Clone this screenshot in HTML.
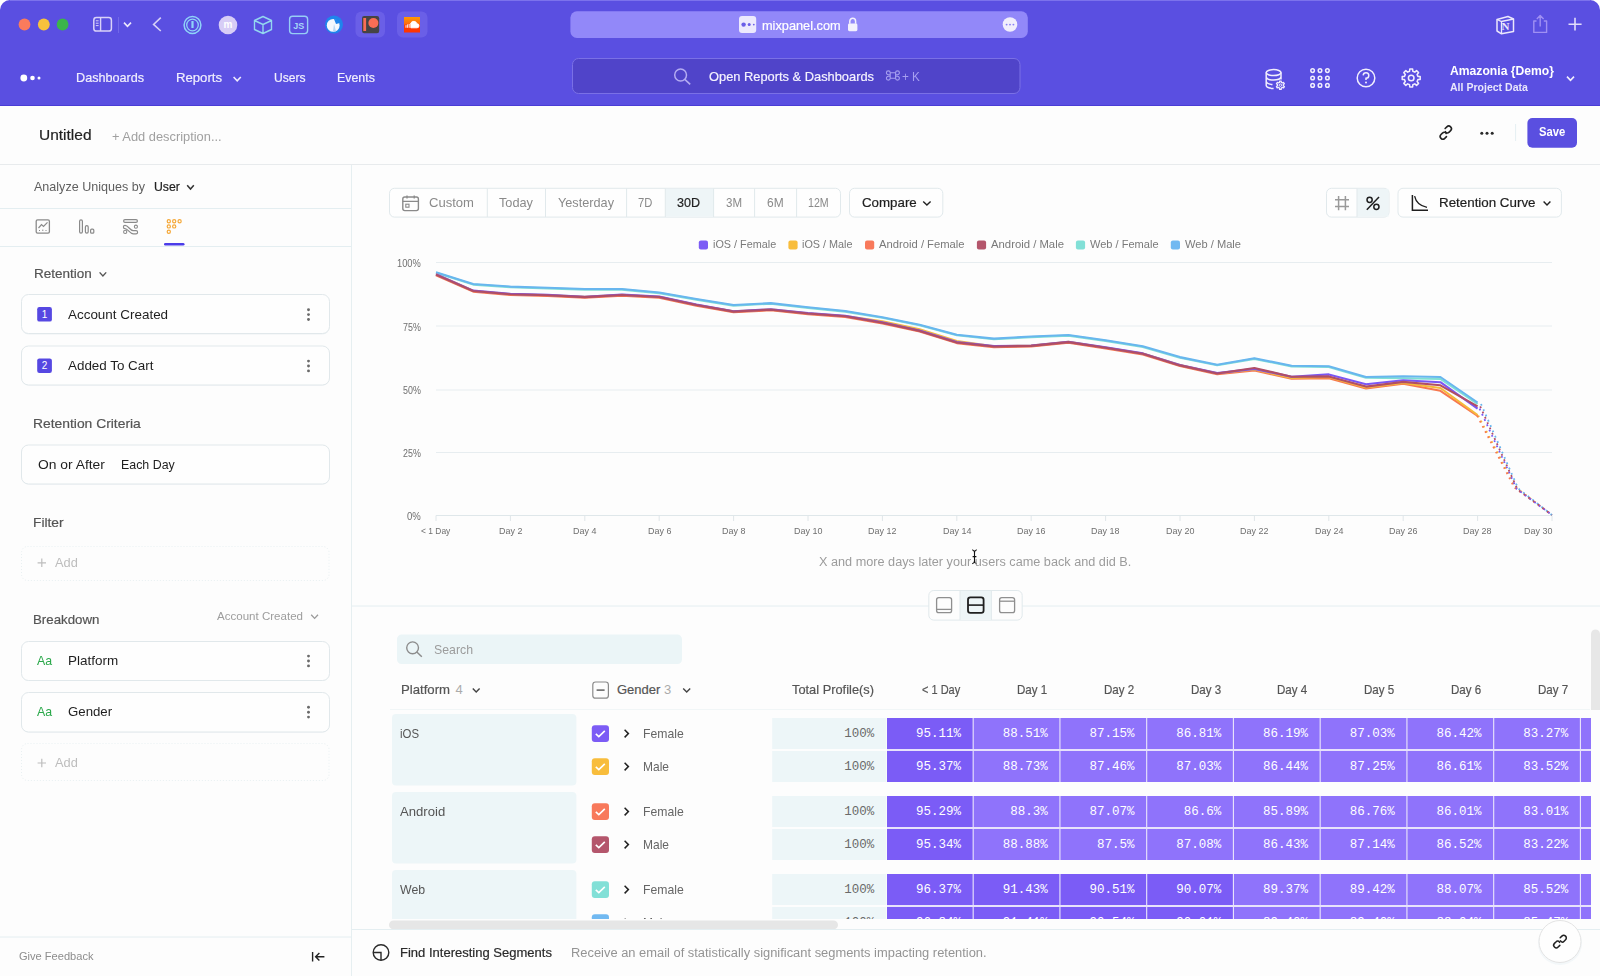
<!DOCTYPE html>
<html><head><meta charset="utf-8"><title>Mixpanel</title>
<style>
html,body{margin:0;padding:0;width:1600px;height:976px;overflow:hidden;background:#ffffff;}
body{position:relative;font-family:"Liberation Sans",sans-serif;}
.t{position:absolute;white-space:nowrap;}
.b{position:absolute;display:block;}
</style></head><body>
<div class="b" style="left:0px;top:0px;width:1600px;height:106px;background:#5a4fe1;border-radius:10px 10px 0 0;"></div>
<div class="b" style="left:10px;top:0px;width:1580px;height:1px;background:#7c72ec;"></div>
<div class="b" style="left:0px;top:105px;width:1600px;height:1px;background:#4a3dd6;"></div>
<svg class="b" style="left:0px;top:0px;" width="1600" height="106" viewBox="0 0 1600 106"><circle cx="24.5" cy="24.5" r="5.9" fill="#fa7b5c"/><circle cx="43.8" cy="24.5" r="5.9" fill="#f8c23c"/><circle cx="62.6" cy="24.5" r="5.9" fill="#3bb54a"/><rect x="93.8" y="17.6" width="17.6" height="13.4" rx="2.6" fill="none" stroke="#d9d2f8" stroke-width="1.5"/><line x1="100.6" y1="17.6" x2="100.6" y2="31" stroke="#d9d2f8" stroke-width="1.4"/><line x1="95.8" y1="20.8" x2="98.6" y2="20.8" stroke="#d9d2f8" stroke-width="1"/><line x1="95.8" y1="23.2" x2="98.6" y2="23.2" stroke="#d9d2f8" stroke-width="1"/><line x1="95.8" y1="25.6" x2="98.6" y2="25.6" stroke="#d9d2f8" stroke-width="1"/><line x1="118.5" y1="17" x2="118.5" y2="33" stroke="#7268e8" stroke-width="1"/><polyline points="124,22.6 127.5,26.4 131,22.6" fill="none" stroke="#ebe7fc" stroke-width="1.6"/><polyline points="160.8,17.6 153.6,24.4 160.8,31" fill="none" stroke="#d6cff6" stroke-width="1.6"/><circle cx="192.5" cy="25" r="8.4" fill="none" stroke="#8fd3f8" stroke-width="1.5"/><circle cx="192.5" cy="25" r="5.8" fill="none" stroke="#8fd3f8" stroke-width="1.3"/><rect x="191.4" y="21" width="2.2" height="7" fill="#8fd3f8"/><circle cx="228" cy="25" r="9.3" fill="#d7cdf6"/><path d="M263 16.5 L271.5 20.5 L271.5 29.5 L263 33.5 L254.5 29.5 L254.5 20.5 Z M254.5 20.5 L263 24.5 L271.5 20.5 M263 24.5 L263 33.5" fill="none" stroke="#93d6ef" stroke-width="1.4" stroke-linejoin="round"/><rect x="289.6" y="16.2" width="18" height="17.4" rx="3" fill="none" stroke="#96cdf5" stroke-width="1.4"/><circle cx="334" cy="24.6" r="9" fill="#1f84ec"/><circle cx="333.2" cy="25.4" r="6.4" fill="#f4f8fe"/><path d="M334 19 Q339 19 340 23 L336 24 Q335 21.5 334 19Z" fill="#1f84ec"/><path d="M333 31 L334 24 L336 31Z" fill="#b9d7f4"/><rect x="355.5" y="11.5" width="29.5" height="26" rx="6" fill="#6a5fe7"/><rect x="362" y="16" width="17.2" height="17.2" rx="2.2" fill="#454444"/><rect x="363.3" y="18" width="2.8" height="13" fill="#f96d55"/><circle cx="373.4" cy="23" r="5" fill="#f96d55"/><rect x="397" y="11.5" width="30.5" height="26" rx="6" fill="#6a5fe7"/><defs><linearGradient id="sc" x1="0" y1="0" x2="0" y2="1"><stop offset="0" stop-color="#ff9a00"/><stop offset="0.45" stop-color="#ff6a10"/><stop offset="0.55" stop-color="#ff3d00"/><stop offset="1" stop-color="#ff3300"/></linearGradient></defs><rect x="404" y="17" width="16" height="15.5" fill="url(#sc)"/><path d="M406 27.8 V25.2 M407.6 27.8 V24.4 M409.2 27.8 V24 M410.8 27.8 H417 A2 2 0 0 0 417 23.8 A3.4 3.4 0 0 0 410.8 23 Z" fill="#fff" stroke="#fff" stroke-width="0.9"/><rect x="570.4" y="11.3" width="457.4" height="26.6" rx="6.5" fill="#9288f9"/><rect x="739" y="16" width="17.2" height="17" rx="3" fill="#ece9fd"/><circle cx="743.6" cy="24.6" r="2.2" fill="#6a5ee8"/><circle cx="749.2" cy="24.6" r="1.5" fill="#6a5ee8"/><circle cx="753.8" cy="24.6" r="0.9" fill="#6a5ee8"/><rect x="848" y="23.6" width="9.4" height="7.6" rx="1.4" fill="#f3f1fd"/><path d="M849.8 23.8 V21.2 A2.9 2.9 0 0 1 855.6 21.2 V23.8" fill="none" stroke="#f3f1fd" stroke-width="1.5"/><circle cx="1010" cy="24.5" r="7.3" fill="#f1effc"/><circle cx="1006.6" cy="24.6" r="0.95" fill="#8a80f5"/><circle cx="1010" cy="24.6" r="0.95" fill="#8a80f5"/><circle cx="1013.4" cy="24.6" r="0.95" fill="#8a80f5"/><path d="M1497 19.5 L1508 16.5 L1513.5 19 L1513.5 31.5 L1501.5 33.8 L1497 31 Z" fill="none" stroke="#ebe7fc" stroke-width="1.5" stroke-linejoin="round"/><path d="M1497 19.5 L1501.5 21.5 L1513.5 19 M1501.5 21.5 V33.8" fill="none" stroke="#ebe7fc" stroke-width="1.3"/><path d="M1536.5 21 H1533.8 V32.4 H1546.6 V21 H1543.8 M1540.2 26.5 V15.6 M1536.8 19 L1540.2 15.6 L1543.6 19" fill="none" stroke="#9f90f3" stroke-width="1.4" stroke-linejoin="round"/><path d="M1568.5 24.2 H1581.6 M1575 17.8 V30.6" stroke="#e2ddfb" stroke-width="1.6"/><circle cx="23.8" cy="78" r="3.4" fill="#fff"/><circle cx="32.5" cy="78" r="2.3" fill="#fff"/><circle cx="39" cy="78" r="1.5" fill="#fff"/><polyline points="233.6,77 237.2,80.8 240.8,77" fill="none" stroke="#eeebfd" stroke-width="1.6"/><rect x="572.5" y="58.5" width="447.5" height="35" rx="6" fill="#5044c9" stroke="#7a70e6" stroke-width="1"/><circle cx="680.6" cy="75" r="5.9" fill="none" stroke="#b4acf2" stroke-width="1.5"/><line x1="684.8" y1="79.3" x2="690.2" y2="84.4" stroke="#b4acf2" stroke-width="1.6"/><path d="M890.2 72.8 H895.6 V78.2 H890.2 Z M890.2 72.8 A1.9 1.9 0 1 0 888.3 74.7 H890.2 Z M895.6 72.8 A1.9 1.9 0 1 1 897.5 74.7 H895.6 Z M890.2 78.2 A1.9 1.9 0 1 1 888.3 76.3 H890.2 Z M895.6 78.2 A1.9 1.9 0 1 0 897.5 76.3 H895.6 Z" fill="none" stroke="#a69ff0" stroke-width="1.1"/><ellipse cx="1273.6" cy="72.6" rx="7.4" ry="3" fill="none" stroke="#f1eefd" stroke-width="1.5"/><path d="M1266.2 72.6 V85.4 Q1266.6 88.4 1273.6 88.4 M1266.2 77 Q1267 80 1273.6 80 Q1280.2 80 1281 77 M1266.2 81.4 Q1267 84.3 1272.5 84.4 M1281 72.6 V79.5" fill="none" stroke="#f1eefd" stroke-width="1.5"/><polygon points="1279.47,82.35 1279.61,81.07 1281.19,81.07 1281.33,82.35 1282.41,82.97 1283.58,82.46 1284.37,83.82 1283.33,84.58 1283.33,85.82 1284.37,86.58 1283.58,87.94 1282.41,87.43 1281.33,88.05 1281.19,89.33 1279.61,89.33 1279.47,88.05 1278.39,87.43 1277.22,87.94 1276.43,86.58 1277.47,85.82 1277.47,84.58 1276.43,83.82 1277.22,82.46 1278.39,82.97" fill="#5a4fe1" stroke="#f1eefd" stroke-width="1.3" stroke-linejoin="round"/><circle cx="1280.4" cy="85.2" r="1.2" fill="none" stroke="#f1eefd" stroke-width="1"/><circle cx="1312.6" cy="70.6" r="1.8" fill="none" stroke="#f1eefd" stroke-width="1.5"/><circle cx="1320" cy="70.6" r="1.8" fill="none" stroke="#f1eefd" stroke-width="1.5"/><circle cx="1327.4" cy="70.6" r="1.8" fill="none" stroke="#f1eefd" stroke-width="1.5"/><circle cx="1312.6" cy="78" r="1.8" fill="none" stroke="#f1eefd" stroke-width="1.5"/><circle cx="1320" cy="78" r="1.8" fill="none" stroke="#f1eefd" stroke-width="1.5"/><circle cx="1327.4" cy="78" r="1.8" fill="none" stroke="#f1eefd" stroke-width="1.5"/><circle cx="1312.6" cy="85.4" r="1.8" fill="none" stroke="#f1eefd" stroke-width="1.5"/><circle cx="1320" cy="85.4" r="1.8" fill="none" stroke="#f1eefd" stroke-width="1.5"/><circle cx="1327.4" cy="85.4" r="1.8" fill="none" stroke="#f1eefd" stroke-width="1.5"/><circle cx="1366" cy="78" r="8.8" fill="none" stroke="#f1eefd" stroke-width="1.5"/><path d="M1363.2 75.4 A2.8 2.8 0 1 1 1366 78.3 V80" fill="none" stroke="#f1eefd" stroke-width="1.5"/><circle cx="1366" cy="82.6" r="1" fill="#f1eefd"/><polygon points="1409.59,71.29 1409.78,69.01 1412.62,69.01 1412.81,71.29 1414.81,72.12 1416.55,70.64 1418.56,72.65 1417.08,74.39 1417.91,76.39 1420.19,76.58 1420.19,79.42 1417.91,79.61 1417.08,81.61 1418.56,83.35 1416.55,85.36 1414.81,83.88 1412.81,84.71 1412.62,86.99 1409.78,86.99 1409.59,84.71 1407.59,83.88 1405.85,85.36 1403.84,83.35 1405.32,81.61 1404.49,79.61 1402.21,79.42 1402.21,76.58 1404.49,76.39 1405.32,74.39 1403.84,72.65 1405.85,70.64 1407.59,72.12" fill="none" stroke="#f1eefd" stroke-width="1.5" stroke-linejoin="round"/><circle cx="1411.2" cy="78" r="2.8" fill="none" stroke="#f1eefd" stroke-width="1.5"/><polyline points="1567,76.6 1570.5,80.4 1574,76.6" fill="none" stroke="#f1eefd" stroke-width="1.6"/></svg>
<div class="t" style="left:762.40px;top:19.00px;font-size:13px;line-height:13px;color:#ffffff;transform:scaleX(0.9800);transform-origin:0 0;-webkit-text-stroke:0.2px currentColor;">mixpanel.com</div>
<div class="t" style="left:223.55px;top:20.14px;font-size:10px;line-height:10px;color:#ffffff;font-weight:bold;">m</div>
<div class="t" style="left:293.20px;top:21.59px;font-size:9px;line-height:9px;color:#a6d6f8;font-weight:bold;">JS</div>
<div class="t" style="left:1501.60px;top:20.89px;font-size:11px;line-height:11px;color:#ebe7fc;font-weight:bold;font-family:'Liberation Serif',serif;">N</div>
<div class="t" style="left:76.40px;top:71.38px;font-size:13.5px;line-height:13.5px;color:#f1effd;transform:scaleX(0.9368);transform-origin:0 0;-webkit-text-stroke:0.2px currentColor;">Dashboards</div>
<div class="t" style="left:175.70px;top:71.38px;font-size:13.5px;line-height:13.5px;color:#f1effd;transform:scaleX(0.9735);transform-origin:0 0;-webkit-text-stroke:0.2px currentColor;">Reports</div>
<div class="t" style="left:274.00px;top:71.38px;font-size:13.5px;line-height:13.5px;color:#f1effd;transform:scaleX(0.8965);transform-origin:0 0;-webkit-text-stroke:0.2px currentColor;">Users</div>
<div class="t" style="left:336.60px;top:71.38px;font-size:13.5px;line-height:13.5px;color:#f1effd;transform:scaleX(0.9164);transform-origin:0 0;-webkit-text-stroke:0.2px currentColor;">Events</div>
<div class="t" style="left:708.50px;top:69.58px;font-size:13.5px;line-height:13.5px;color:#f4f2fe;transform:scaleX(0.9518);transform-origin:0 0;-webkit-text-stroke:0.2px currentColor;">Open Reports &amp; Dashboards</div>
<div class="t" style="left:902.00px;top:69.58px;font-size:13.5px;line-height:13.5px;color:#a69ff0;transform:scaleX(0.8668);transform-origin:0 0;">+ K</div>
<div class="t" style="left:1450.00px;top:64.00px;font-size:13px;line-height:13px;color:#ffffff;font-weight:bold;transform:scaleX(0.9348);transform-origin:0 0;">Amazonia {Demo}</div>
<div class="t" style="left:1450.00px;top:81.69px;font-size:11px;line-height:11px;color:#e9e6fc;font-weight:bold;transform:scaleX(0.9582);transform-origin:0 0;">All Project Data</div>
<div class="b" style="left:0px;top:106px;width:1600px;height:58px;background:#fdfdfd;"></div>
<div class="b" style="left:0px;top:164px;width:1600px;height:1px;background:#e8ebed;"></div>
<div class="t" style="left:38.50px;top:127.31px;font-size:15px;line-height:15px;color:#1f1f1f;transform:scaleX(1.0324);transform-origin:0 0;-webkit-text-stroke:0.2px currentColor;">Untitled</div>
<div class="t" style="left:111.90px;top:130.62px;font-size:12.5px;line-height:12.5px;color:#a0a0a0;transform:scaleX(1.0277);transform-origin:0 0;">+ Add description...</div>
<svg class="b" style="left:1400px;top:106px;" width="200" height="58" viewBox="1400 106 200 58"><g transform="translate(1445.8 132.6) scale(0.86) translate(-1446 -132.3)"><path d="M1445.2 127.6 L1447.2 125.6 A2.4 2.4 0 0 1 1451.6 130 L1449.6 132 A2.4 2.4 0 0 1 1445.6 131.2 M1446.8 137 L1444.8 139 A2.4 2.4 0 0 1 1440.4 134.6 L1442.4 132.6 A2.4 2.4 0 0 1 1446.4 133.4" fill="none" stroke="#222" stroke-width="1.8" stroke-linecap="round"/></g><circle cx="1481.8" cy="133.2" r="1.5" fill="#2a2a2a"/><circle cx="1487" cy="133.2" r="1.5" fill="#2a2a2a"/><circle cx="1492.2" cy="133.2" r="1.5" fill="#2a2a2a"/><line x1="1515.6" y1="124" x2="1515.6" y2="141" stroke="#e5eff2" stroke-width="1"/><rect x="1527.4" y="118" width="49.6" height="29.7" rx="5" fill="#5a4fe0"/></svg>
<div class="t" style="left:1538.70px;top:126.14px;font-size:12.6px;line-height:12.6px;color:#ffffff;font-weight:bold;transform:scaleX(0.8930);transform-origin:0 0;">Save</div>
<div class="b" style="left:0px;top:165px;width:351px;height:811px;background:#fdfdfd;"></div>
<div class="b" style="left:351px;top:165px;width:1px;height:811px;background:#e6eff1;"></div>
<div class="t" style="left:34.00px;top:179.50px;font-size:13px;line-height:13px;color:#5f5f5f;transform:scaleX(0.9652);transform-origin:0 0;">Analyze Uniques by</div>
<div class="t" style="left:153.60px;top:179.50px;font-size:13px;line-height:13px;color:#222;transform:scaleX(0.9435);transform-origin:0 0;-webkit-text-stroke:0.2px currentColor;">User</div>
<svg class="b" style="left:0px;top:165px;" width="351" height="811" viewBox="0 165 351 811"><polyline points="187.2,185.2 190.5,189 193.8,185.2" fill="none" stroke="#333" stroke-width="1.5"/><line x1="0" y1="208.5" x2="351" y2="208.5" stroke="#e4eef1" stroke-width="1"/><line x1="0" y1="246.5" x2="351" y2="246.5" stroke="#e4eef1" stroke-width="1"/><rect x="36.2" y="219.8" width="13.2" height="13.4" rx="1.4" fill="none" stroke="#8a8a8a" stroke-width="1.3"/><polyline points="38.5,228 41.5,224.6 43.5,226.4 47.5,222.4" fill="none" stroke="#8a8a8a" stroke-width="1.2"/><path d="M39.5 231 v-1 M42.8 231 v-1.4 M46 231 v-1" stroke="#8a8a8a" stroke-width="1"/><rect x="79.6" y="219.8" width="2.8" height="13.4" rx="1.4" fill="none" stroke="#8a8a8a" stroke-width="1.2"/><rect x="85.4" y="225.6" width="2.8" height="7.6" rx="1.4" fill="none" stroke="#8a8a8a" stroke-width="1.2"/><rect x="90.6" y="229.2" width="3.2" height="4" rx="1" fill="none" stroke="#8a8a8a" stroke-width="1.2"/><rect x="123.6" y="219.6" width="13.8" height="2.8" rx="1.4" fill="none" stroke="#8a8a8a" stroke-width="1.2"/><path d="M125 225.4 C128.4 225.4 129.8 230.6 133.2 230.6 H136 A1.6 1.6 0 0 1 136 233.8 H133.2 C129.4 233.8 128 228.6 125 228.6 A1.6 1.6 0 0 1 125 225.4 Z" fill="none" stroke="#8a8a8a" stroke-width="1.15"/><circle cx="135.9" cy="226.7" r="1.55" fill="none" stroke="#8a8a8a" stroke-width="1.1"/><circle cx="125.2" cy="231.9" r="1.6" fill="none" stroke="#8a8a8a" stroke-width="1.1"/><circle cx="168.8" cy="221.2" r="1.6" fill="none" stroke="#f5a93a" stroke-width="1.2"/><circle cx="174.2" cy="221.2" r="1.6" fill="none" stroke="#f5a93a" stroke-width="1.2"/><circle cx="179.6" cy="221.2" r="1.6" fill="none" stroke="#f5a93a" stroke-width="1.2"/><circle cx="168.8" cy="226.4" r="1.6" fill="none" stroke="#f5a93a" stroke-width="1.2"/><circle cx="174.2" cy="226.4" r="1.6" fill="none" stroke="#f5a93a" stroke-width="1.2"/><circle cx="168.8" cy="231.8" r="1.6" fill="none" stroke="#f5a93a" stroke-width="1.2"/><rect x="164" y="243" width="20.5" height="2.6" rx="1.3" fill="#4b3ce9"/><polyline points="99.6,272.4 102.9,276 106.2,272.4" fill="none" stroke="#555" stroke-width="1.4"/><rect x="21.5" y="295.5" width="308" height="39" rx="7" fill="#eef2f4"/><rect x="21.5" y="294.5" width="308" height="39" rx="7" fill="#fefefe" stroke="#e1e8eb" stroke-width="1"/><circle cx="308.5" cy="309.70000000000005" r="1.45" fill="#6a6a6a"/><circle cx="308.5" cy="314.6" r="1.45" fill="#6a6a6a"/><circle cx="308.5" cy="319.5" r="1.45" fill="#6a6a6a"/><rect x="21.5" y="346.5" width="308" height="39" rx="7" fill="#eef2f4"/><rect x="21.5" y="346.0" width="308" height="39.0" rx="7" fill="#fefefe" stroke="#e1e8eb" stroke-width="1"/><circle cx="308.5" cy="361.1" r="1.45" fill="#6a6a6a"/><circle cx="308.5" cy="366" r="1.45" fill="#6a6a6a"/><circle cx="308.5" cy="370.9" r="1.45" fill="#6a6a6a"/><rect x="37.2" y="307" width="14.7" height="14.6" rx="2.2" fill="#5648e2"/><rect x="37.2" y="358.4" width="14.7" height="14.6" rx="2.2" fill="#5648e2"/><rect x="21.5" y="445.5" width="308" height="39" rx="7" fill="#eef2f4"/><rect x="21.5" y="445.0" width="308" height="39.0" rx="7" fill="#fefefe" stroke="#e1e8eb" stroke-width="1"/><rect x="21.5" y="546.5" width="307.5" height="34" rx="6" fill="none" stroke="#e8f0f2" stroke-width="1" stroke-dasharray="1 2"/><path d="M37.6 562.8 H46 M41.8 558.6 V567" stroke="#bdbdbd" stroke-width="1.2"/><polyline points="311.2,614.8 314.6,618.4 318,614.8" fill="none" stroke="#9a9a9a" stroke-width="1.3"/><rect x="21.5" y="642" width="308" height="39" rx="7" fill="#eef2f4"/><rect x="21.5" y="641.5" width="308" height="39" rx="7" fill="#fefefe" stroke="#e1e8eb" stroke-width="1"/><circle cx="308.5" cy="656.1" r="1.45" fill="#6a6a6a"/><circle cx="308.5" cy="661" r="1.45" fill="#6a6a6a"/><circle cx="308.5" cy="665.9" r="1.45" fill="#6a6a6a"/><rect x="21.5" y="693" width="308" height="39.5" rx="7" fill="#eef2f4"/><rect x="21.5" y="692.5" width="308" height="39.5" rx="7" fill="#fefefe" stroke="#e1e8eb" stroke-width="1"/><circle cx="308.5" cy="707.3000000000001" r="1.45" fill="#6a6a6a"/><circle cx="308.5" cy="712.2" r="1.45" fill="#6a6a6a"/><circle cx="308.5" cy="717.1" r="1.45" fill="#6a6a6a"/><rect x="21.5" y="743.5" width="307.5" height="37" rx="6" fill="none" stroke="#e8f0f2" stroke-width="1" stroke-dasharray="1 2"/><path d="M37.6 763 H46 M41.8 758.8 V767.2" stroke="#bdbdbd" stroke-width="1.2"/><line x1="0" y1="937" x2="351" y2="937" stroke="#e4eef1" stroke-width="1"/><path d="M312.6 952 V961.4 M324.4 956.7 H315.6 M319.4 952.9 L315.6 956.7 L319.4 960.5" fill="none" stroke="#222" stroke-width="1.4"/></svg>
<div class="t" style="left:34.10px;top:266.50px;font-size:13px;line-height:13px;color:#555;transform:scaleX(1.0368);transform-origin:0 0;-webkit-text-stroke:0.2px currentColor;">Retention</div>
<div class="t" style="left:41.83px;top:309.94px;font-size:10px;line-height:10px;color:#ffffff;">1</div>
<div class="t" style="left:41.83px;top:361.34px;font-size:10px;line-height:10px;color:#ffffff;">2</div>
<div class="t" style="left:68.40px;top:307.60px;font-size:13px;line-height:13px;color:#1f1f1f;transform:scaleX(1.0336);transform-origin:0 0;">Account Created</div>
<div class="t" style="left:67.80px;top:359.00px;font-size:13px;line-height:13px;color:#1f1f1f;transform:scaleX(1.0308);transform-origin:0 0;">Added To Cart</div>
<div class="t" style="left:33.00px;top:417.00px;font-size:13px;line-height:13px;color:#555;transform:scaleX(1.0657);transform-origin:0 0;-webkit-text-stroke:0.2px currentColor;">Retention Criteria</div>
<div class="t" style="left:37.50px;top:457.90px;font-size:13px;line-height:13px;color:#1f1f1f;transform:scaleX(1.0644);transform-origin:0 0;">On or After</div>
<div class="t" style="left:120.50px;top:457.90px;font-size:13px;line-height:13px;color:#1f1f1f;transform:scaleX(0.9530);transform-origin:0 0;">Each Day</div>
<div class="t" style="left:33.00px;top:516.00px;font-size:13px;line-height:13px;color:#555;transform:scaleX(1.0588);transform-origin:0 0;-webkit-text-stroke:0.2px currentColor;">Filter</div>
<div class="t" style="left:54.60px;top:556.40px;font-size:13px;line-height:13px;color:#bdbdbd;transform:scaleX(0.9849);transform-origin:0 0;">Add</div>
<div class="t" style="left:33.00px;top:613.40px;font-size:13px;line-height:13px;color:#555;transform:scaleX(1.0208);transform-origin:0 0;-webkit-text-stroke:0.2px currentColor;">Breakdown</div>
<div class="t" style="left:217.00px;top:610.67px;font-size:11.5px;line-height:11.5px;color:#9d9d9d;transform:scaleX(1.0041);transform-origin:0 0;">Account Created</div>
<div class="t" style="left:37.30px;top:654.20px;font-size:13px;line-height:13px;color:#2aa84a;transform:scaleX(0.9497);transform-origin:0 0;">Aa</div>
<div class="t" style="left:68.20px;top:654.20px;font-size:13px;line-height:13px;color:#1f1f1f;transform:scaleX(1.0351);transform-origin:0 0;">Platform</div>
<div class="t" style="left:37.30px;top:705.30px;font-size:13px;line-height:13px;color:#2aa84a;transform:scaleX(0.9497);transform-origin:0 0;">Aa</div>
<div class="t" style="left:68.20px;top:705.30px;font-size:13px;line-height:13px;color:#1f1f1f;transform:scaleX(1.0173);transform-origin:0 0;">Gender</div>
<div class="t" style="left:54.60px;top:756.20px;font-size:13px;line-height:13px;color:#bdbdbd;transform:scaleX(0.9849);transform-origin:0 0;">Add</div>
<div class="t" style="left:18.50px;top:951.47px;font-size:11.5px;line-height:11.5px;color:#8d8d8d;transform:scaleX(0.9625);transform-origin:0 0;">Give Feedback</div>
<div class="b" style="left:352px;top:165px;width:1248px;height:811px;background:#fdfdfd;"></div>
<svg class="b" style="left:352px;top:165px;" width="1248" height="545" viewBox="352 165 1248 545"><rect x="389.5" y="188.3" width="451" height="28.8" rx="5" fill="#fefefe" stroke="#e1e9ec" stroke-width="1"/><rect x="665.3" y="188.8" width="48.3" height="27.8" fill="#eef5f7"/><line x1="487.3" y1="188.5" x2="487.3" y2="217" stroke="#e1e9ec" stroke-width="1"/><line x1="545.5" y1="188.5" x2="545.5" y2="217" stroke="#e1e9ec" stroke-width="1"/><line x1="626.6" y1="188.5" x2="626.6" y2="217" stroke="#e1e9ec" stroke-width="1"/><line x1="665.3" y1="188.5" x2="665.3" y2="217" stroke="#e1e9ec" stroke-width="1"/><line x1="713.6" y1="188.5" x2="713.6" y2="217" stroke="#e1e9ec" stroke-width="1"/><line x1="754.6" y1="188.5" x2="754.6" y2="217" stroke="#e1e9ec" stroke-width="1"/><line x1="796.6" y1="188.5" x2="796.6" y2="217" stroke="#e1e9ec" stroke-width="1"/><rect x="402.8" y="197" width="15.6" height="13.6" rx="2" fill="none" stroke="#8a8a8a" stroke-width="1.4"/><path d="M402.8 201.4 H418.4 M407 195.4 V198.4 M414.2 195.4 V198.4" stroke="#8a8a8a" stroke-width="1.3"/><rect x="405.8" y="204.2" width="3.2" height="3" fill="none" stroke="#8a8a8a" stroke-width="1.1"/><rect x="849.5" y="188.3" width="93.3" height="28.8" rx="5" fill="#fefefe" stroke="#e1e9ec" stroke-width="1"/><polyline points="923.2,201.4 926.9,205 930.6,201.4" fill="none" stroke="#222" stroke-width="1.4"/><rect x="1326.5" y="188.3" width="62.5" height="28.8" rx="5" fill="#fefefe" stroke="#e1e9ec" stroke-width="1"/><rect x="1357" y="188.8" width="31.5" height="27.8" fill="#eef5f7"/><line x1="1357" y1="188.5" x2="1357" y2="217" stroke="#e1e9ec" stroke-width="1"/><path d="M1338.6 196 V210.2 M1345.4 196 V210.2 M1335 199.8 H1349 M1335 206.4 H1349" stroke="#9a9a9a" stroke-width="1.5"/><circle cx="1369.6" cy="199.8" r="2.6" fill="none" stroke="#1f1f1f" stroke-width="1.5"/><circle cx="1376.4" cy="206.8" r="2.6" fill="none" stroke="#1f1f1f" stroke-width="1.5"/><line x1="1366.8" y1="209.8" x2="1379" y2="197" stroke="#1f1f1f" stroke-width="1.5"/><rect x="1398" y="188.3" width="163.4" height="28.8" rx="5" fill="#fefefe" stroke="#e1e9ec" stroke-width="1"/><path d="M1412.4 195 V210.2 H1428" fill="none" stroke="#1f1f1f" stroke-width="1.5"/><path d="M1414.6 196.2 Q1416.6 205.4 1427 207.4" fill="none" stroke="#1f1f1f" stroke-width="1.3"/><polyline points="1543.6,201.4 1547,205 1550.4,201.4" fill="none" stroke="#222" stroke-width="1.4"/><rect x="698.8" y="240.4" width="9.2" height="9" rx="2" fill="#7c5cf5"/><rect x="788.4" y="240.4" width="9.2" height="9" rx="2" fill="#f8bd3c"/><rect x="865" y="240.4" width="9.2" height="9" rx="2" fill="#f8795b"/><rect x="976.9" y="240.4" width="9.2" height="9" rx="2" fill="#b4566c"/><rect x="1075.9" y="240.4" width="9.2" height="9" rx="2" fill="#82e0d7"/><rect x="1170.8" y="240.4" width="9.2" height="9" rx="2" fill="#71b9f1"/><line x1="436" y1="262.5" x2="1552" y2="262.5" stroke="#e7edf0" stroke-width="1"/><line x1="436" y1="326" x2="1552" y2="326" stroke="#e7edf0" stroke-width="1"/><line x1="436" y1="390" x2="1552" y2="390" stroke="#e7edf0" stroke-width="1"/><line x1="436" y1="452.5" x2="1552" y2="452.5" stroke="#e7edf0" stroke-width="1"/><line x1="436" y1="515.5" x2="1552" y2="515.5" stroke="#dfe7ea" stroke-width="1"/><line x1="436.0" y1="515.5" x2="436.0" y2="521" stroke="#e0e6e9" stroke-width="1"/><line x1="510.4" y1="515.5" x2="510.4" y2="521" stroke="#e0e6e9" stroke-width="1"/><line x1="584.8" y1="515.5" x2="584.8" y2="521" stroke="#e0e6e9" stroke-width="1"/><line x1="659.2" y1="515.5" x2="659.2" y2="521" stroke="#e0e6e9" stroke-width="1"/><line x1="733.6" y1="515.5" x2="733.6" y2="521" stroke="#e0e6e9" stroke-width="1"/><line x1="808.0" y1="515.5" x2="808.0" y2="521" stroke="#e0e6e9" stroke-width="1"/><line x1="882.4" y1="515.5" x2="882.4" y2="521" stroke="#e0e6e9" stroke-width="1"/><line x1="956.8" y1="515.5" x2="956.8" y2="521" stroke="#e0e6e9" stroke-width="1"/><line x1="1031.2" y1="515.5" x2="1031.2" y2="521" stroke="#e0e6e9" stroke-width="1"/><line x1="1105.6" y1="515.5" x2="1105.6" y2="521" stroke="#e0e6e9" stroke-width="1"/><line x1="1180.0" y1="515.5" x2="1180.0" y2="521" stroke="#e0e6e9" stroke-width="1"/><line x1="1254.4" y1="515.5" x2="1254.4" y2="521" stroke="#e0e6e9" stroke-width="1"/><line x1="1328.8" y1="515.5" x2="1328.8" y2="521" stroke="#e0e6e9" stroke-width="1"/><line x1="1403.2" y1="515.5" x2="1403.2" y2="521" stroke="#e0e6e9" stroke-width="1"/><line x1="1477.6" y1="515.5" x2="1477.6" y2="521" stroke="#e0e6e9" stroke-width="1"/><line x1="1552.0" y1="515.5" x2="1552.0" y2="521" stroke="#e0e6e9" stroke-width="1"/><polyline points="436.0,272.8 473.2,284.6 510.4,287.2 547.6,288.4 584.8,289.6 622.0,289.6 659.2,293.1 696.4,299.6 733.6,305.6 770.8,303.7 808.0,307.9 845.2,311.6 882.4,317.8 919.6,325.3 956.8,335.3 994.0,339.2 1031.2,337.1 1068.4,335.6 1105.6,340.9 1142.8,346.9 1180.0,357.7 1217.2,365.3 1254.4,358.9 1291.6,366.4 1328.8,366.9 1366.0,377.8 1403.2,378.3 1440.4,379.0 1477.6,404.0" fill="none" stroke="#7fdfd5" stroke-width="2.1" stroke-linejoin="round"/><polyline points="436.0,272.2 473.2,284.0 510.4,286.6 547.6,287.8 584.8,289.0 622.0,289.0 659.2,292.5 696.4,299.0 733.6,305.0 770.8,303.1 808.0,307.3 845.2,311.0 882.4,317.2 919.6,324.7 956.8,334.7 994.0,338.6 1031.2,336.5 1068.4,335.0 1105.6,340.3 1142.8,346.3 1180.0,357.1 1217.2,364.7 1254.4,358.3 1291.6,365.8 1328.8,366.3 1366.0,377.0 1403.2,376.3 1440.4,377.0 1477.6,402.5" fill="none" stroke="#68b6ee" stroke-width="2.1" stroke-linejoin="round"/><polyline points="436.0,275.2 473.2,291.6 510.4,294.9 547.6,295.9 584.8,297.7 622.0,295.6 659.2,297.6 696.4,305.6 733.6,312.2 770.8,310.3 808.0,314.1 845.2,316.9 882.4,323.4 919.6,331.5 956.8,343.1 994.0,347.1 1031.2,346.5 1068.4,342.7 1105.6,348.4 1142.8,354.4 1180.0,366.0 1217.2,374.1 1254.4,370.5 1291.6,378.7 1328.8,378.3 1366.0,388.4 1403.2,383.7 1440.4,390.8 1477.6,415.8" fill="none" stroke="#f7784f" stroke-width="2.1" stroke-linejoin="round"/><polyline points="436.0,274.3 473.2,290.7 510.4,294.0 547.6,295.0 584.8,296.8 622.0,294.7 659.2,296.7 696.4,304.7 733.6,311.3 770.8,309.4 808.0,313.2 845.2,316.0 882.4,321.2 919.6,329.2 956.8,341.0 994.0,346.2 1031.2,345.6 1068.4,341.8 1105.6,347.5 1142.8,353.5 1180.0,365.1 1217.2,373.2 1254.4,369.5 1291.6,378.0 1328.8,377.0 1366.0,387.5 1403.2,383.0 1440.4,388.0 1477.6,415.0" fill="none" stroke="#f6b93a" stroke-width="2.1" stroke-linejoin="round"/><polyline points="436.0,274.2 473.2,290.6 510.4,293.9 547.6,294.9 584.8,296.7 622.0,294.6 659.2,296.6 696.4,304.6 733.6,311.2 770.8,309.3 808.0,313.1 845.2,315.9 882.4,322.4 919.6,330.5 956.8,342.1 994.0,346.1 1031.2,345.5 1068.4,341.7 1105.6,347.4 1142.8,353.4 1180.0,365.0 1217.2,373.1 1254.4,368.9 1291.6,376.7 1328.8,374.4 1366.0,384.2 1403.2,380.3 1440.4,382.2 1477.6,408.7" fill="none" stroke="#7b57f4" stroke-width="2.1" stroke-linejoin="round"/><polyline points="436.0,274.6 473.2,291.0 510.4,294.3 547.6,295.3 584.8,297.1 622.0,295.0 659.2,297.0 696.4,305.0 733.6,311.6 770.8,309.7 808.0,313.5 845.2,316.3 882.4,322.8 919.6,330.9 956.8,342.5 994.0,346.5 1031.2,345.9 1068.4,342.1 1105.6,347.8 1142.8,353.8 1180.0,365.4 1217.2,373.5 1254.4,368.0 1291.6,376.7 1328.8,376.4 1366.0,386.6 1403.2,381.9 1440.4,385.3 1477.6,406.4" fill="none" stroke="#b04e66" stroke-width="2.1" stroke-linejoin="round"/><polyline points="1478.2,415.5 1515.4,487.0 1552.0,515" fill="none" stroke="#f6b93a" stroke-width="1.8" stroke-dasharray="1.8 4"/><polyline points="1477.2,415.8 1514.4,487.6 1552.0,515" fill="none" stroke="#f7784f" stroke-width="1.8" stroke-dasharray="1.8 4"/><polyline points="1481.0,404.0 1518.2,488.5 1552.0,515" fill="none" stroke="#68b6ee" stroke-width="1.8" stroke-dasharray="1.8 4"/><polyline points="1480.2,406.4 1517.4,489.2 1552.0,515" fill="none" stroke="#b04e66" stroke-width="1.8" stroke-dasharray="1.8 4"/><polyline points="1479.6,408.7 1516.8,489.0 1552.0,515" fill="none" stroke="#7b57f4" stroke-width="1.8" stroke-dasharray="1.8 4"/><path d="M972.2 549.8 Q974.5 550.4 974.5 552.6 V561 Q974.5 563.2 972.2 563.8 M976.8 549.8 Q974.5 550.4 974.5 552.6 M976.8 563.8 Q974.5 563.2 974.5 561 M972.6 556.6 H976.4" fill="none" stroke="#111" stroke-width="1.1"/><line x1="352" y1="606" x2="1600" y2="606" stroke="#e4eef1" stroke-width="1"/><rect x="928.8" y="590.5" width="93.4" height="29.6" rx="5" fill="#fdfdfd" stroke="#e1e9ec" stroke-width="1"/><rect x="960" y="591" width="31.4" height="28.6" fill="#eef5f7"/><line x1="960" y1="590.5" x2="960" y2="620" stroke="#e1e9ec" stroke-width="1"/><line x1="991.4" y1="590.5" x2="991.4" y2="620" stroke="#e1e9ec" stroke-width="1"/><rect x="936.6" y="597.6" width="15" height="15" rx="2.2" fill="none" stroke="#8f8f8f" stroke-width="1.3"/><line x1="936.6" y1="609.4" x2="951.6" y2="609.4" stroke="#8f8f8f" stroke-width="1.3"/><rect x="968" y="597.4" width="15.6" height="15.4" rx="2.4" fill="none" stroke="#1f1f1f" stroke-width="1.8"/><line x1="968" y1="605.1" x2="983.6" y2="605.1" stroke="#1f1f1f" stroke-width="1.6"/><rect x="999.6" y="597.6" width="15" height="15" rx="2.2" fill="none" stroke="#8f8f8f" stroke-width="1.3"/><line x1="999.6" y1="601.2" x2="1014.6" y2="601.2" stroke="#8f8f8f" stroke-width="1.3"/><rect x="397" y="634.6" width="285" height="29.4" rx="4.5" fill="#ebf5f7"/><circle cx="412.6" cy="647.8" r="5.9" fill="none" stroke="#8c8c8c" stroke-width="1.4"/><line x1="416.8" y1="652" x2="421.8" y2="656.8" stroke="#8c8c8c" stroke-width="1.5"/><polyline points="472.8,688.4 476.2,692 479.6,688.4" fill="none" stroke="#444" stroke-width="1.4"/><rect x="592.8" y="682" width="15.6" height="16.2" rx="2.8" fill="none" stroke="#8a8a8a" stroke-width="1.2"/><line x1="596.6" y1="690.1" x2="604.6" y2="690.1" stroke="#555" stroke-width="1.4"/><polyline points="683.2,688.4 686.7,692 690.2,688.4" fill="none" stroke="#444" stroke-width="1.4"/><line x1="390" y1="710" x2="1590" y2="710" stroke="#e4eef1" stroke-width="1"/><rect x="1591" y="629.5" width="9" height="236.2" rx="4.5" fill="#e7e7e7"/></svg>
<div class="t" style="left:429.30px;top:196.30px;font-size:13px;line-height:13px;color:#8a8a8a;transform:scaleX(1.0045);transform-origin:0 0;">Custom</div>
<div class="t" style="left:499.00px;top:196.30px;font-size:13px;line-height:13px;color:#8a8a8a;transform:scaleX(0.9798);transform-origin:0 0;">Today</div>
<div class="t" style="left:557.70px;top:196.30px;font-size:13px;line-height:13px;color:#8a8a8a;transform:scaleX(0.9765);transform-origin:0 0;">Yesterday</div>
<div class="t" style="left:638.00px;top:196.30px;font-size:13px;line-height:13px;color:#8a8a8a;transform:scaleX(0.8614);transform-origin:0 0;">7D</div>
<div class="t" style="left:677.40px;top:196.30px;font-size:13px;line-height:13px;color:#1f1f1f;transform:scaleX(0.9644);transform-origin:0 0;-webkit-text-stroke:0.2px currentColor;">30D</div>
<div class="t" style="left:725.70px;top:196.30px;font-size:13px;line-height:13px;color:#8a8a8a;transform:scaleX(0.8864);transform-origin:0 0;">3M</div>
<div class="t" style="left:766.80px;top:196.30px;font-size:13px;line-height:13px;color:#8a8a8a;transform:scaleX(0.9197);transform-origin:0 0;">6M</div>
<div class="t" style="left:808.30px;top:196.30px;font-size:13px;line-height:13px;color:#8a8a8a;transform:scaleX(0.8182);transform-origin:0 0;">12M</div>
<div class="t" style="left:861.50px;top:196.30px;font-size:13px;line-height:13px;color:#1f1f1f;transform:scaleX(1.0234);transform-origin:0 0;-webkit-text-stroke:0.2px currentColor;">Compare</div>
<div class="t" style="left:1438.50px;top:196.00px;font-size:13px;line-height:13px;color:#1f1f1f;transform:scaleX(1.0271);transform-origin:0 0;-webkit-text-stroke:0.2px currentColor;">Retention Curve</div>
<div class="t" style="left:713.00px;top:239.29px;font-size:11px;line-height:11px;color:#7a7a7a;transform:scaleX(0.9844);transform-origin:0 0;">iOS / Female</div>
<div class="t" style="left:802.40px;top:239.29px;font-size:11px;line-height:11px;color:#7a7a7a;transform:scaleX(0.9834);transform-origin:0 0;">iOS / Male</div>
<div class="t" style="left:879.00px;top:239.29px;font-size:11px;line-height:11px;color:#7a7a7a;transform:scaleX(1.0221);transform-origin:0 0;">Android / Female</div>
<div class="t" style="left:991.00px;top:239.29px;font-size:11px;line-height:11px;color:#7a7a7a;transform:scaleX(1.0289);transform-origin:0 0;">Android / Male</div>
<div class="t" style="left:1090.00px;top:239.29px;font-size:11px;line-height:11px;color:#7a7a7a;transform:scaleX(1.0037);transform-origin:0 0;">Web / Female</div>
<div class="t" style="left:1184.80px;top:239.29px;font-size:11px;line-height:11px;color:#7a7a7a;transform:scaleX(1.0099);transform-origin:0 0;">Web / Male</div>
<div class="t" style="left:397.40px;top:259.04px;font-size:10px;line-height:10px;color:#6f6f6f;transform:scaleX(0.9297);transform-origin:0 0;">100%</div>
<div class="t" style="left:403.40px;top:322.94px;font-size:10px;line-height:10px;color:#6f6f6f;transform:scaleX(0.8900);transform-origin:0 0;">75%</div>
<div class="t" style="left:403.40px;top:386.14px;font-size:10px;line-height:10px;color:#6f6f6f;transform:scaleX(0.8900);transform-origin:0 0;">50%</div>
<div class="t" style="left:403.40px;top:449.34px;font-size:10px;line-height:10px;color:#6f6f6f;transform:scaleX(0.8900);transform-origin:0 0;">25%</div>
<div class="t" style="left:407.40px;top:512.34px;font-size:10px;line-height:10px;color:#6f6f6f;transform:scaleX(0.9550);transform-origin:0 0;">0%</div>
<div class="t" style="left:421.35px;top:525.71px;font-size:9.8px;line-height:9.8px;color:#6f6f6f;transform:scaleX(0.8605);transform-origin:0 0;">&lt; 1 Day</div>
<div class="t" style="left:498.70px;top:525.71px;font-size:9.8px;line-height:9.8px;color:#6f6f6f;transform:scaleX(0.9141);transform-origin:0 0;">Day 2</div>
<div class="t" style="left:573.10px;top:525.71px;font-size:9.8px;line-height:9.8px;color:#6f6f6f;transform:scaleX(0.9141);transform-origin:0 0;">Day 4</div>
<div class="t" style="left:647.50px;top:525.71px;font-size:9.8px;line-height:9.8px;color:#6f6f6f;transform:scaleX(0.9141);transform-origin:0 0;">Day 6</div>
<div class="t" style="left:721.90px;top:525.71px;font-size:9.8px;line-height:9.8px;color:#6f6f6f;transform:scaleX(0.9141);transform-origin:0 0;">Day 8</div>
<div class="t" style="left:793.80px;top:525.71px;font-size:9.8px;line-height:9.8px;color:#6f6f6f;transform:scaleX(0.9147);transform-origin:0 0;">Day 10</div>
<div class="t" style="left:868.20px;top:525.71px;font-size:9.8px;line-height:9.8px;color:#6f6f6f;transform:scaleX(0.9147);transform-origin:0 0;">Day 12</div>
<div class="t" style="left:942.60px;top:525.71px;font-size:9.8px;line-height:9.8px;color:#6f6f6f;transform:scaleX(0.9147);transform-origin:0 0;">Day 14</div>
<div class="t" style="left:1017.00px;top:525.71px;font-size:9.8px;line-height:9.8px;color:#6f6f6f;transform:scaleX(0.9147);transform-origin:0 0;">Day 16</div>
<div class="t" style="left:1091.40px;top:525.71px;font-size:9.8px;line-height:9.8px;color:#6f6f6f;transform:scaleX(0.9147);transform-origin:0 0;">Day 18</div>
<div class="t" style="left:1165.80px;top:525.71px;font-size:9.8px;line-height:9.8px;color:#6f6f6f;transform:scaleX(0.9147);transform-origin:0 0;">Day 20</div>
<div class="t" style="left:1240.20px;top:525.71px;font-size:9.8px;line-height:9.8px;color:#6f6f6f;transform:scaleX(0.9147);transform-origin:0 0;">Day 22</div>
<div class="t" style="left:1314.60px;top:525.71px;font-size:9.8px;line-height:9.8px;color:#6f6f6f;transform:scaleX(0.9147);transform-origin:0 0;">Day 24</div>
<div class="t" style="left:1389.00px;top:525.71px;font-size:9.8px;line-height:9.8px;color:#6f6f6f;transform:scaleX(0.9147);transform-origin:0 0;">Day 26</div>
<div class="t" style="left:1463.40px;top:525.71px;font-size:9.8px;line-height:9.8px;color:#6f6f6f;transform:scaleX(0.9147);transform-origin:0 0;">Day 28</div>
<div class="t" style="left:1523.60px;top:525.71px;font-size:9.8px;line-height:9.8px;color:#6f6f6f;transform:scaleX(0.9147);transform-origin:0 0;">Day 30</div>
<div class="t" style="left:819.30px;top:556.42px;font-size:12.5px;line-height:12.5px;color:#9c9c9c;transform:scaleX(1.0146);transform-origin:0 0;">X and more days later your users came back and did B.</div>
<div class="t" style="left:434.00px;top:643.40px;font-size:13px;line-height:13px;color:#9c9c9c;transform:scaleX(0.9466);transform-origin:0 0;">Search</div>
<div class="t" style="left:401.00px;top:683.40px;font-size:13px;line-height:13px;color:#555;transform:scaleX(1.0124);transform-origin:0 0;-webkit-text-stroke:0.2px currentColor;">Platform</div>
<div class="t" style="left:455.60px;top:683.40px;font-size:13px;line-height:13px;color:#ababab;">4</div>
<div class="t" style="left:617.00px;top:683.40px;font-size:13px;line-height:13px;color:#555;-webkit-text-stroke:0.2px currentColor;">Gender</div>
<div class="t" style="left:664.00px;top:683.40px;font-size:13px;line-height:13px;color:#ababab;">3</div>
<div class="t" style="left:792.40px;top:683.40px;font-size:13px;line-height:13px;color:#555;transform:scaleX(0.9868);transform-origin:0 0;-webkit-text-stroke:0.2px currentColor;">Total Profile(s)</div>
<div class="t" style="left:922.40px;top:683.40px;font-size:13px;line-height:13px;color:#555;transform:scaleX(0.8461);transform-origin:0 0;-webkit-text-stroke:0.2px currentColor;">&lt; 1 Day</div>
<div class="t" style="left:1017.15px;top:683.40px;font-size:13px;line-height:13px;color:#555;transform:scaleX(0.8895);transform-origin:0 0;-webkit-text-stroke:0.2px currentColor;">Day 1</div>
<div class="t" style="left:1103.90px;top:683.40px;font-size:13px;line-height:13px;color:#555;transform:scaleX(0.8895);transform-origin:0 0;-webkit-text-stroke:0.2px currentColor;">Day 2</div>
<div class="t" style="left:1190.65px;top:683.40px;font-size:13px;line-height:13px;color:#555;transform:scaleX(0.8895);transform-origin:0 0;-webkit-text-stroke:0.2px currentColor;">Day 3</div>
<div class="t" style="left:1277.40px;top:683.40px;font-size:13px;line-height:13px;color:#555;transform:scaleX(0.8895);transform-origin:0 0;-webkit-text-stroke:0.2px currentColor;">Day 4</div>
<div class="t" style="left:1364.15px;top:683.40px;font-size:13px;line-height:13px;color:#555;transform:scaleX(0.8895);transform-origin:0 0;-webkit-text-stroke:0.2px currentColor;">Day 5</div>
<div class="t" style="left:1450.90px;top:683.40px;font-size:13px;line-height:13px;color:#555;transform:scaleX(0.8895);transform-origin:0 0;-webkit-text-stroke:0.2px currentColor;">Day 6</div>
<div class="t" style="left:1537.65px;top:683.40px;font-size:13px;line-height:13px;color:#555;transform:scaleX(0.8895);transform-origin:0 0;-webkit-text-stroke:0.2px currentColor;">Day 7</div>
<div class="b" style="left:0;top:0;width:1600px;height:919px;overflow:hidden;clip-path:inset(710px 0 0 352px);"><svg class="b" style="left:352px;top:710px;" width="1239" height="209" viewBox="352 710 1239 209"><rect x="392" y="714" width="184.4" height="71.6" rx="4" fill="#edf6f8"/><rect x="887" y="718" width="704" height="64" fill="#e7e2fb"/><rect x="392" y="792" width="184.4" height="71.6" rx="4" fill="#edf6f8"/><rect x="887" y="796" width="704" height="64" fill="#e7e2fb"/><rect x="392" y="870" width="184.4" height="71.6" rx="4" fill="#edf6f8"/><rect x="887" y="874" width="704" height="64" fill="#e7e2fb"/><rect x="772.2" y="718" width="114.2" height="31" fill="#edf6f8"/><rect x="887.00" y="718" width="85.6" height="31" fill="#7b5cf6"/><rect x="973.75" y="718" width="85.6" height="31" fill="#8f73fb"/><rect x="1060.50" y="718" width="85.6" height="31" fill="#8f73fb"/><rect x="1147.25" y="718" width="85.6" height="31" fill="#8f73fb"/><rect x="1234.00" y="718" width="85.6" height="31" fill="#8f73fb"/><rect x="1320.75" y="718" width="85.6" height="31" fill="#8f73fb"/><rect x="1407.50" y="718" width="85.6" height="31" fill="#8f73fb"/><rect x="1494.25" y="718" width="85.6" height="31" fill="#8f73fb"/><rect x="1581.00" y="718" width="85.6" height="31" fill="#8f73fb"/><rect x="591.8" y="725.2" width="17.2" height="16.8" rx="3" fill="#7c5cf5"/><polyline points="595.8,733.8 598.8,736.6 604.8,730.8" fill="none" stroke="#fff" stroke-width="1.6"/><polyline points="624.6,729.8 628.4,733.6 624.6,737.4" fill="none" stroke="#222" stroke-width="1.5"/><rect x="772.2" y="751" width="114.2" height="31" fill="#edf6f8"/><rect x="887.00" y="751" width="85.6" height="31" fill="#7b5cf6"/><rect x="973.75" y="751" width="85.6" height="31" fill="#8f73fb"/><rect x="1060.50" y="751" width="85.6" height="31" fill="#8f73fb"/><rect x="1147.25" y="751" width="85.6" height="31" fill="#8f73fb"/><rect x="1234.00" y="751" width="85.6" height="31" fill="#8f73fb"/><rect x="1320.75" y="751" width="85.6" height="31" fill="#8f73fb"/><rect x="1407.50" y="751" width="85.6" height="31" fill="#8f73fb"/><rect x="1494.25" y="751" width="85.6" height="31" fill="#8f73fb"/><rect x="1581.00" y="751" width="85.6" height="31" fill="#8f73fb"/><rect x="591.8" y="758.2" width="17.2" height="16.8" rx="3" fill="#f8bd3c"/><polyline points="595.8,766.8 598.8,769.6 604.8,763.8" fill="none" stroke="#fff" stroke-width="1.6"/><polyline points="624.6,762.8 628.4,766.6 624.6,770.4" fill="none" stroke="#222" stroke-width="1.5"/><rect x="772.2" y="796" width="114.2" height="31" fill="#edf6f8"/><rect x="887.00" y="796" width="85.6" height="31" fill="#7b5cf6"/><rect x="973.75" y="796" width="85.6" height="31" fill="#8f73fb"/><rect x="1060.50" y="796" width="85.6" height="31" fill="#8f73fb"/><rect x="1147.25" y="796" width="85.6" height="31" fill="#8f73fb"/><rect x="1234.00" y="796" width="85.6" height="31" fill="#8f73fb"/><rect x="1320.75" y="796" width="85.6" height="31" fill="#8f73fb"/><rect x="1407.50" y="796" width="85.6" height="31" fill="#8f73fb"/><rect x="1494.25" y="796" width="85.6" height="31" fill="#8f73fb"/><rect x="1581.00" y="796" width="85.6" height="31" fill="#8f73fb"/><rect x="591.8" y="803.2" width="17.2" height="16.8" rx="3" fill="#f8795b"/><polyline points="595.8,811.8 598.8,814.6 604.8,808.8" fill="none" stroke="#fff" stroke-width="1.6"/><polyline points="624.6,807.8 628.4,811.6 624.6,815.4" fill="none" stroke="#222" stroke-width="1.5"/><rect x="772.2" y="829" width="114.2" height="31" fill="#edf6f8"/><rect x="887.00" y="829" width="85.6" height="31" fill="#7b5cf6"/><rect x="973.75" y="829" width="85.6" height="31" fill="#8f73fb"/><rect x="1060.50" y="829" width="85.6" height="31" fill="#8f73fb"/><rect x="1147.25" y="829" width="85.6" height="31" fill="#8f73fb"/><rect x="1234.00" y="829" width="85.6" height="31" fill="#8f73fb"/><rect x="1320.75" y="829" width="85.6" height="31" fill="#8f73fb"/><rect x="1407.50" y="829" width="85.6" height="31" fill="#8f73fb"/><rect x="1494.25" y="829" width="85.6" height="31" fill="#8f73fb"/><rect x="1581.00" y="829" width="85.6" height="31" fill="#8f73fb"/><rect x="591.8" y="836.2" width="17.2" height="16.8" rx="3" fill="#b4566c"/><polyline points="595.8,844.8 598.8,847.6 604.8,841.8" fill="none" stroke="#fff" stroke-width="1.6"/><polyline points="624.6,840.8 628.4,844.6 624.6,848.4" fill="none" stroke="#222" stroke-width="1.5"/><rect x="772.2" y="874" width="114.2" height="31" fill="#edf6f8"/><rect x="887.00" y="874" width="85.6" height="31" fill="#7b5cf6"/><rect x="973.75" y="874" width="85.6" height="31" fill="#7b5cf6"/><rect x="1060.50" y="874" width="85.6" height="31" fill="#7b5cf6"/><rect x="1147.25" y="874" width="85.6" height="31" fill="#7b5cf6"/><rect x="1234.00" y="874" width="85.6" height="31" fill="#8f73fb"/><rect x="1320.75" y="874" width="85.6" height="31" fill="#8f73fb"/><rect x="1407.50" y="874" width="85.6" height="31" fill="#8f73fb"/><rect x="1494.25" y="874" width="85.6" height="31" fill="#8f73fb"/><rect x="1581.00" y="874" width="85.6" height="31" fill="#8f73fb"/><rect x="591.8" y="881.2" width="17.2" height="16.8" rx="3" fill="#82e0d7"/><polyline points="595.8,889.8 598.8,892.6 604.8,886.8" fill="none" stroke="#fff" stroke-width="1.6"/><polyline points="624.6,885.8 628.4,889.6 624.6,893.4" fill="none" stroke="#222" stroke-width="1.5"/><rect x="772.2" y="907" width="114.2" height="31" fill="#edf6f8"/><rect x="887.00" y="907" width="85.6" height="31" fill="#7b5cf6"/><rect x="973.75" y="907" width="85.6" height="31" fill="#7b5cf6"/><rect x="1060.50" y="907" width="85.6" height="31" fill="#7b5cf6"/><rect x="1147.25" y="907" width="85.6" height="31" fill="#7b5cf6"/><rect x="1234.00" y="907" width="85.6" height="31" fill="#8f73fb"/><rect x="1320.75" y="907" width="85.6" height="31" fill="#8f73fb"/><rect x="1407.50" y="907" width="85.6" height="31" fill="#8f73fb"/><rect x="1494.25" y="907" width="85.6" height="31" fill="#8f73fb"/><rect x="1581.00" y="907" width="85.6" height="31" fill="#8f73fb"/><rect x="591.8" y="914.2" width="17.2" height="16.8" rx="3" fill="#71b9f1"/><polyline points="595.8,922.8 598.8,925.6 604.8,919.8" fill="none" stroke="#fff" stroke-width="1.6"/><polyline points="624.6,918.8 628.4,922.6 624.6,926.4" fill="none" stroke="#222" stroke-width="1.5"/></svg>
<div class="t" style="left:642.50px;top:727.00px;font-size:13px;line-height:13px;color:#666;transform:scaleX(0.9389);transform-origin:0 0;">Female</div>
<div class="t" style="left:844.35px;top:728.42px;font-size:12.5px;line-height:12.5px;color:#6a6a6a;font-family:'Liberation Mono', monospace;">100%</div>
<div class="t" style="left:916.05px;top:728.42px;font-size:12.5px;line-height:12.5px;color:#ffffff;font-family:'Liberation Mono', monospace;">95.11%</div>
<div class="t" style="left:1002.80px;top:728.42px;font-size:12.5px;line-height:12.5px;color:#ffffff;font-family:'Liberation Mono', monospace;">88.51%</div>
<div class="t" style="left:1089.55px;top:728.42px;font-size:12.5px;line-height:12.5px;color:#ffffff;font-family:'Liberation Mono', monospace;">87.15%</div>
<div class="t" style="left:1176.30px;top:728.42px;font-size:12.5px;line-height:12.5px;color:#ffffff;font-family:'Liberation Mono', monospace;">86.81%</div>
<div class="t" style="left:1263.05px;top:728.42px;font-size:12.5px;line-height:12.5px;color:#ffffff;font-family:'Liberation Mono', monospace;">86.19%</div>
<div class="t" style="left:1349.80px;top:728.42px;font-size:12.5px;line-height:12.5px;color:#ffffff;font-family:'Liberation Mono', monospace;">87.03%</div>
<div class="t" style="left:1436.55px;top:728.42px;font-size:12.5px;line-height:12.5px;color:#ffffff;font-family:'Liberation Mono', monospace;">86.42%</div>
<div class="t" style="left:1523.30px;top:728.42px;font-size:12.5px;line-height:12.5px;color:#ffffff;font-family:'Liberation Mono', monospace;">83.27%</div>
<div class="t" style="left:642.50px;top:760.00px;font-size:13px;line-height:13px;color:#666;transform:scaleX(0.9220);transform-origin:0 0;">Male</div>
<div class="t" style="left:844.35px;top:761.42px;font-size:12.5px;line-height:12.5px;color:#6a6a6a;font-family:'Liberation Mono', monospace;">100%</div>
<div class="t" style="left:916.05px;top:761.42px;font-size:12.5px;line-height:12.5px;color:#ffffff;font-family:'Liberation Mono', monospace;">95.37%</div>
<div class="t" style="left:1002.80px;top:761.42px;font-size:12.5px;line-height:12.5px;color:#ffffff;font-family:'Liberation Mono', monospace;">88.73%</div>
<div class="t" style="left:1089.55px;top:761.42px;font-size:12.5px;line-height:12.5px;color:#ffffff;font-family:'Liberation Mono', monospace;">87.46%</div>
<div class="t" style="left:1176.30px;top:761.42px;font-size:12.5px;line-height:12.5px;color:#ffffff;font-family:'Liberation Mono', monospace;">87.03%</div>
<div class="t" style="left:1263.05px;top:761.42px;font-size:12.5px;line-height:12.5px;color:#ffffff;font-family:'Liberation Mono', monospace;">86.44%</div>
<div class="t" style="left:1349.80px;top:761.42px;font-size:12.5px;line-height:12.5px;color:#ffffff;font-family:'Liberation Mono', monospace;">87.25%</div>
<div class="t" style="left:1436.55px;top:761.42px;font-size:12.5px;line-height:12.5px;color:#ffffff;font-family:'Liberation Mono', monospace;">86.61%</div>
<div class="t" style="left:1523.30px;top:761.42px;font-size:12.5px;line-height:12.5px;color:#ffffff;font-family:'Liberation Mono', monospace;">83.52%</div>
<div class="t" style="left:642.50px;top:805.00px;font-size:13px;line-height:13px;color:#666;transform:scaleX(0.9389);transform-origin:0 0;">Female</div>
<div class="t" style="left:844.35px;top:806.42px;font-size:12.5px;line-height:12.5px;color:#6a6a6a;font-family:'Liberation Mono', monospace;">100%</div>
<div class="t" style="left:916.05px;top:806.42px;font-size:12.5px;line-height:12.5px;color:#ffffff;font-family:'Liberation Mono', monospace;">95.29%</div>
<div class="t" style="left:1010.30px;top:806.42px;font-size:12.5px;line-height:12.5px;color:#ffffff;font-family:'Liberation Mono', monospace;">88.3%</div>
<div class="t" style="left:1089.55px;top:806.42px;font-size:12.5px;line-height:12.5px;color:#ffffff;font-family:'Liberation Mono', monospace;">87.07%</div>
<div class="t" style="left:1183.80px;top:806.42px;font-size:12.5px;line-height:12.5px;color:#ffffff;font-family:'Liberation Mono', monospace;">86.6%</div>
<div class="t" style="left:1263.05px;top:806.42px;font-size:12.5px;line-height:12.5px;color:#ffffff;font-family:'Liberation Mono', monospace;">85.89%</div>
<div class="t" style="left:1349.80px;top:806.42px;font-size:12.5px;line-height:12.5px;color:#ffffff;font-family:'Liberation Mono', monospace;">86.76%</div>
<div class="t" style="left:1436.55px;top:806.42px;font-size:12.5px;line-height:12.5px;color:#ffffff;font-family:'Liberation Mono', monospace;">86.01%</div>
<div class="t" style="left:1523.30px;top:806.42px;font-size:12.5px;line-height:12.5px;color:#ffffff;font-family:'Liberation Mono', monospace;">83.01%</div>
<div class="t" style="left:642.50px;top:838.00px;font-size:13px;line-height:13px;color:#666;transform:scaleX(0.9220);transform-origin:0 0;">Male</div>
<div class="t" style="left:844.35px;top:839.42px;font-size:12.5px;line-height:12.5px;color:#6a6a6a;font-family:'Liberation Mono', monospace;">100%</div>
<div class="t" style="left:916.05px;top:839.42px;font-size:12.5px;line-height:12.5px;color:#ffffff;font-family:'Liberation Mono', monospace;">95.34%</div>
<div class="t" style="left:1002.80px;top:839.42px;font-size:12.5px;line-height:12.5px;color:#ffffff;font-family:'Liberation Mono', monospace;">88.88%</div>
<div class="t" style="left:1097.05px;top:839.42px;font-size:12.5px;line-height:12.5px;color:#ffffff;font-family:'Liberation Mono', monospace;">87.5%</div>
<div class="t" style="left:1176.30px;top:839.42px;font-size:12.5px;line-height:12.5px;color:#ffffff;font-family:'Liberation Mono', monospace;">87.08%</div>
<div class="t" style="left:1263.05px;top:839.42px;font-size:12.5px;line-height:12.5px;color:#ffffff;font-family:'Liberation Mono', monospace;">86.43%</div>
<div class="t" style="left:1349.80px;top:839.42px;font-size:12.5px;line-height:12.5px;color:#ffffff;font-family:'Liberation Mono', monospace;">87.14%</div>
<div class="t" style="left:1436.55px;top:839.42px;font-size:12.5px;line-height:12.5px;color:#ffffff;font-family:'Liberation Mono', monospace;">86.52%</div>
<div class="t" style="left:1523.30px;top:839.42px;font-size:12.5px;line-height:12.5px;color:#ffffff;font-family:'Liberation Mono', monospace;">83.22%</div>
<div class="t" style="left:642.50px;top:883.00px;font-size:13px;line-height:13px;color:#666;transform:scaleX(0.9389);transform-origin:0 0;">Female</div>
<div class="t" style="left:844.35px;top:884.42px;font-size:12.5px;line-height:12.5px;color:#6a6a6a;font-family:'Liberation Mono', monospace;">100%</div>
<div class="t" style="left:916.05px;top:884.42px;font-size:12.5px;line-height:12.5px;color:#ffffff;font-family:'Liberation Mono', monospace;">96.37%</div>
<div class="t" style="left:1002.80px;top:884.42px;font-size:12.5px;line-height:12.5px;color:#ffffff;font-family:'Liberation Mono', monospace;">91.43%</div>
<div class="t" style="left:1089.55px;top:884.42px;font-size:12.5px;line-height:12.5px;color:#ffffff;font-family:'Liberation Mono', monospace;">90.51%</div>
<div class="t" style="left:1176.30px;top:884.42px;font-size:12.5px;line-height:12.5px;color:#ffffff;font-family:'Liberation Mono', monospace;">90.07%</div>
<div class="t" style="left:1263.05px;top:884.42px;font-size:12.5px;line-height:12.5px;color:#ffffff;font-family:'Liberation Mono', monospace;">89.37%</div>
<div class="t" style="left:1349.80px;top:884.42px;font-size:12.5px;line-height:12.5px;color:#ffffff;font-family:'Liberation Mono', monospace;">89.42%</div>
<div class="t" style="left:1436.55px;top:884.42px;font-size:12.5px;line-height:12.5px;color:#ffffff;font-family:'Liberation Mono', monospace;">88.07%</div>
<div class="t" style="left:1523.30px;top:884.42px;font-size:12.5px;line-height:12.5px;color:#ffffff;font-family:'Liberation Mono', monospace;">85.52%</div>
<div class="t" style="left:642.50px;top:916.00px;font-size:13px;line-height:13px;color:#666;transform:scaleX(0.9220);transform-origin:0 0;">Male</div>
<div class="t" style="left:844.35px;top:917.42px;font-size:12.5px;line-height:12.5px;color:#6a6a6a;font-family:'Liberation Mono', monospace;">100%</div>
<div class="t" style="left:916.05px;top:917.42px;font-size:12.5px;line-height:12.5px;color:#ffffff;font-family:'Liberation Mono', monospace;">96.84%</div>
<div class="t" style="left:1002.80px;top:917.42px;font-size:12.5px;line-height:12.5px;color:#ffffff;font-family:'Liberation Mono', monospace;">91.41%</div>
<div class="t" style="left:1089.55px;top:917.42px;font-size:12.5px;line-height:12.5px;color:#ffffff;font-family:'Liberation Mono', monospace;">90.54%</div>
<div class="t" style="left:1176.30px;top:917.42px;font-size:12.5px;line-height:12.5px;color:#ffffff;font-family:'Liberation Mono', monospace;">90.01%</div>
<div class="t" style="left:1263.05px;top:917.42px;font-size:12.5px;line-height:12.5px;color:#ffffff;font-family:'Liberation Mono', monospace;">89.40%</div>
<div class="t" style="left:1349.80px;top:917.42px;font-size:12.5px;line-height:12.5px;color:#ffffff;font-family:'Liberation Mono', monospace;">89.40%</div>
<div class="t" style="left:1436.55px;top:917.42px;font-size:12.5px;line-height:12.5px;color:#ffffff;font-family:'Liberation Mono', monospace;">88.04%</div>
<div class="t" style="left:1523.30px;top:917.42px;font-size:12.5px;line-height:12.5px;color:#ffffff;font-family:'Liberation Mono', monospace;">85.47%</div>
<div class="t" style="left:400.40px;top:727.00px;font-size:13px;line-height:13px;color:#555;transform:scaleX(0.8776);transform-origin:0 0;">iOS</div>
<div class="t" style="left:400.40px;top:805.00px;font-size:13px;line-height:13px;color:#555;transform:scaleX(1.0089);transform-origin:0 0;">Android</div>
<div class="t" style="left:400.40px;top:883.00px;font-size:13px;line-height:13px;color:#555;transform:scaleX(0.9472);transform-origin:0 0;">Web</div>
</div>
<svg class="b" style="left:352px;top:910px;filter:drop-shadow(0 0 0 transparent);" width="1248" height="66" viewBox="352 910 1248 66"><rect x="389" y="920.4" width="449" height="9" rx="4.5" fill="#e6e6e6"/><line x1="352" y1="929.5" x2="1600" y2="929.5" stroke="#e4eef1" stroke-width="1"/><circle cx="381" cy="952.5" r="7.8" fill="none" stroke="#2a2a2a" stroke-width="1.4"/><path d="M373.2 952.5 H381 V960.3" fill="none" stroke="#2a2a2a" stroke-width="1.4"/><circle cx="1560" cy="943" r="22" fill="#eef4f6" opacity="0.7"/><circle cx="1560" cy="941.5" r="21" fill="#fefefe" stroke="#e3e3e3" stroke-width="1"/><g transform="translate(1560 941.6) scale(0.84) translate(-1560 -941.5)"><path d="M1560.2 937 L1562.2 935 A2.4 2.4 0 0 1 1566.6 939.4 L1564.6 941.4 A2.4 2.4 0 0 1 1560.6 940.6 M1559.8 946 L1557.8 948 A2.4 2.4 0 0 1 1553.4 943.6 L1555.4 941.6 A2.4 2.4 0 0 1 1559.4 942.4" fill="none" stroke="#222" stroke-width="1.8" stroke-linecap="round"/></g></svg>
<div class="t" style="left:399.70px;top:946.62px;font-size:12.5px;line-height:12.5px;color:#2a2a2a;transform:scaleX(1.0411);transform-origin:0 0;-webkit-text-stroke:0.2px currentColor;">Find Interesting Segments</div>
<div class="t" style="left:571.40px;top:946.62px;font-size:12.5px;line-height:12.5px;color:#949494;transform:scaleX(1.0314);transform-origin:0 0;">Receive an email of statistically significant segments impacting retention.</div>
</body></html>
